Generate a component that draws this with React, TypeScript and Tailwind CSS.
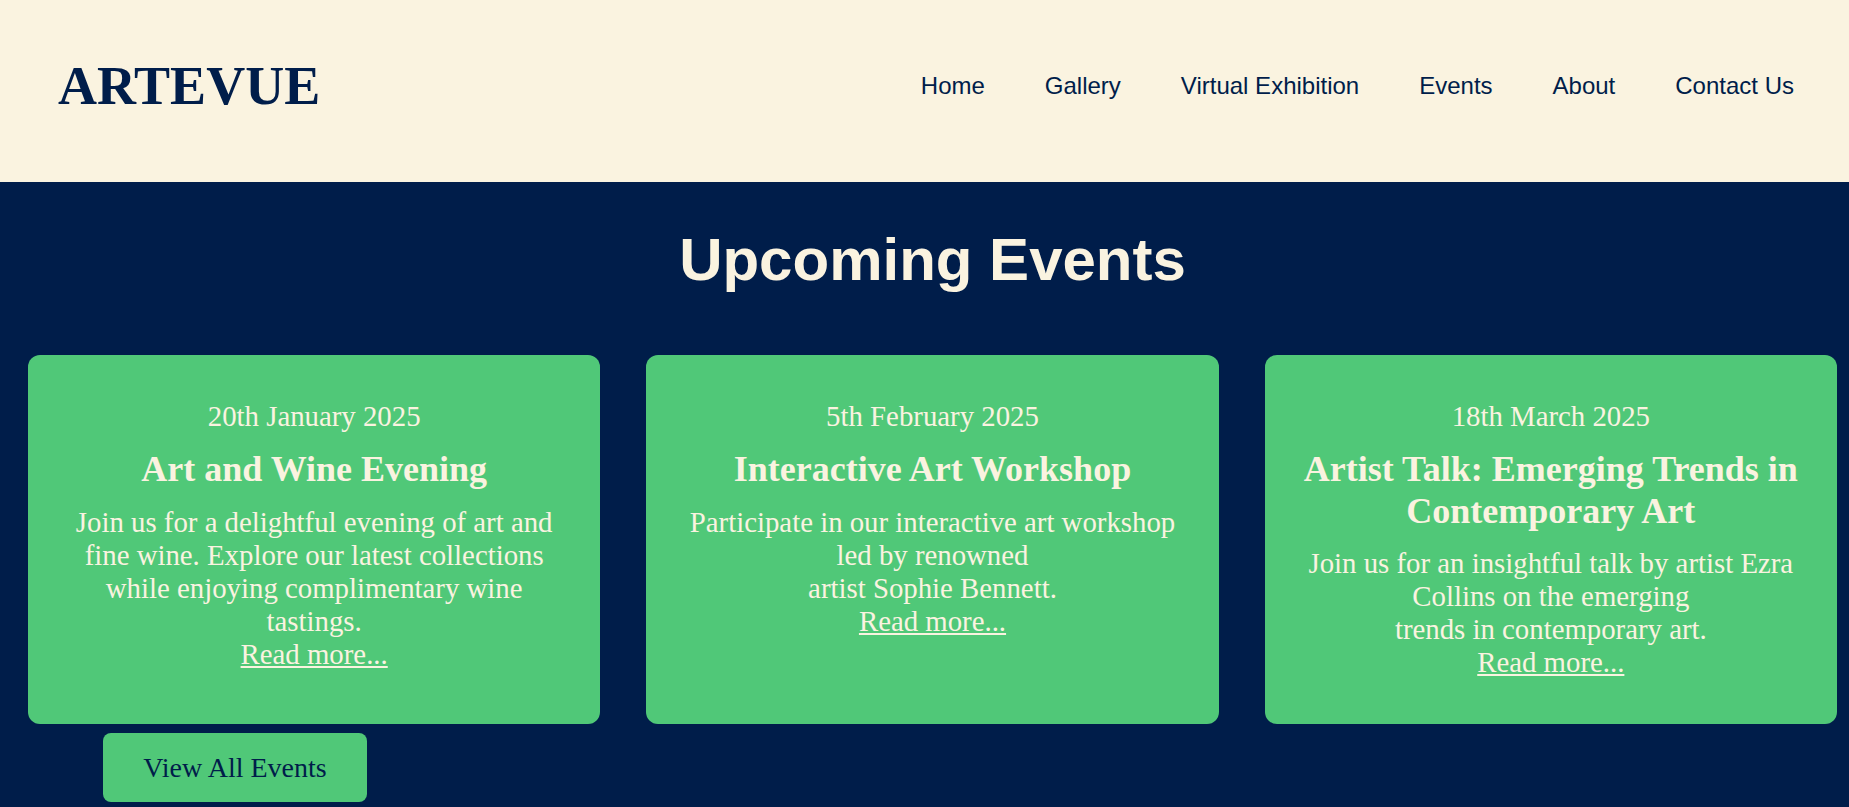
export default function App() {
  const events = [
    {
      date: "20th January 2025",
      title: "Art and Wine Evening",
      lines: [
        "Join us for a delightful evening of art and fine wine. Explore our latest collections while enjoying complimentary wine tastings.",
      ],
    },
    {
      date: "5th February 2025",
      title: "Interactive Art Workshop",
      lines: ["Participate in our interactive art workshop led by renowned", "artist Sophie Bennett."],
    },
    {
      date: "18th March 2025",
      title: "Artist Talk: Emerging Trends in Contemporary Art",
      lines: ["Join us for an insightful talk by artist Ezra Collins on the emerging", "trends in contemporary art."],
    },
  ];

  return (
    <div className="min-h-screen bg-[#001d4a] font-['Liberation_Serif','Times_New_Roman',serif]">
      {/* Header */}
      <header className="h-[182px] bg-[#faf3e0] flex items-center justify-between pl-[58px] pr-[55px]">
        <h1 className="text-[54px] font-bold text-[#001d4a] leading-none -mt-[10px]">ARTEVUE</h1>
        <nav className="flex gap-[60px] font-['Liberation_Sans',Arial,sans-serif] text-[24px] text-[#001d4a] -mt-[10px]">
          <a href="#">Home</a>
          <a href="#">Gallery</a>
          <a href="#">Virtual Exhibition</a>
          <a href="#">Events</a>
          <a href="#">About</a>
          <a href="#">Contact Us</a>
        </nav>
      </header>

      {/* Events */}
      <section className="pt-[43px] pb-[6px]">
        <h2 className="pl-[16px] text-center text-[60px] font-bold leading-[1.15] text-[#faf3e0] font-['Liberation_Sans',Arial,sans-serif]">
          Upcoming Events
        </h2>

        <div className="grid grid-cols-3 gap-[46px] ml-[28px] mr-[12px] mt-[61px]">
          {events.map((e) => (
            <div key={e.title} className="rounded-[12px] bg-[#50c878] px-[30px] pt-[45px] pb-[45px] text-center text-[#faf3e0]">
              <p className="text-[28.8px] leading-[1.15] mb-[16px]">{e.date}</p>
              <h3 className="text-[36px] font-bold leading-[1.15] mb-[15px]">{e.title}</h3>
              <p className="text-[28.8px] leading-[1.15]">
                {e.lines.map((l, i) => (
                  <span key={i}>
                    {l}
                    <br />
                  </span>
                ))}
                <a href="#" className="underline">
                  Read more...
                </a>
              </p>
            </div>
          ))}
        </div>

        <button className="ml-[103px] mt-[9px] w-[264px] h-[69px] rounded-[8px] bg-[#50c878] text-[28px] text-[#001d4a]">
          View All Events
        </button>
      </section>
    </div>
  );
}
